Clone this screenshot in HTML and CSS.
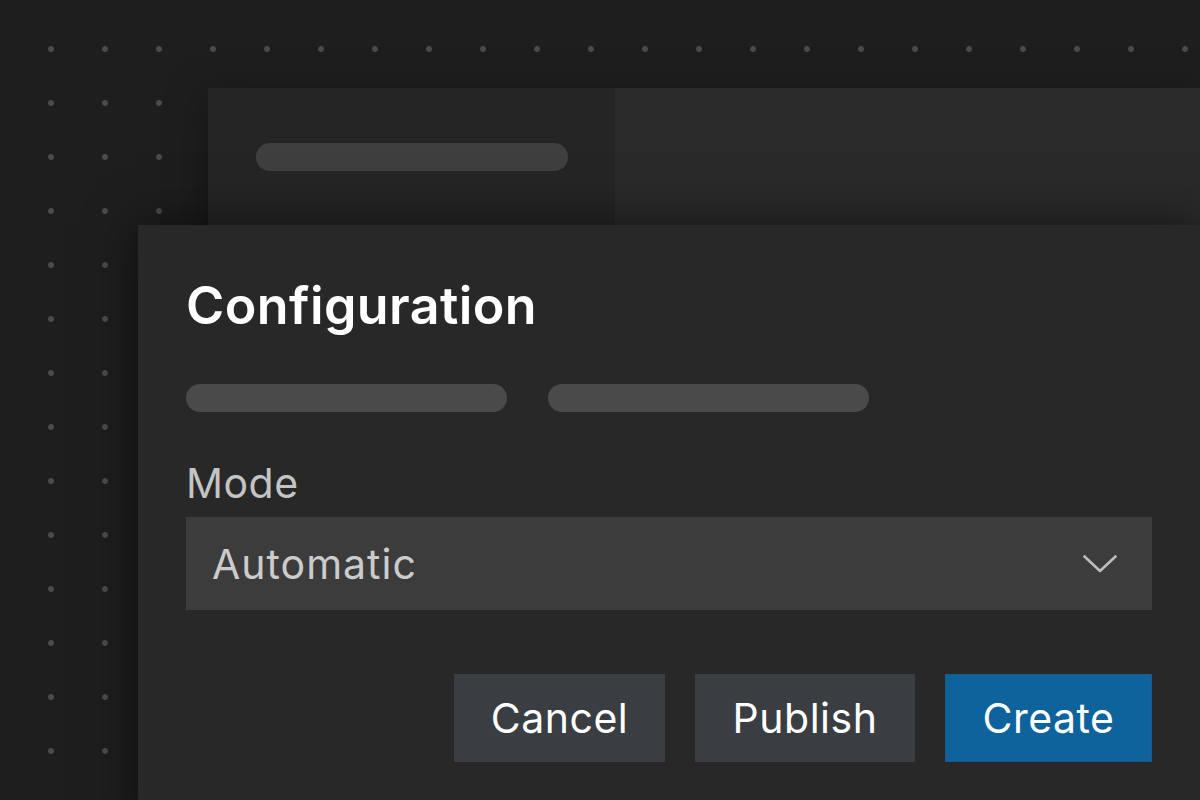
FILE: index.html
```html
<!DOCTYPE html>
<html lang="en">
<head>
<meta charset="utf-8">
<title>Configuration</title>
<link rel="stylesheet" href="styles.css">
</head>
<body>
<div class="desk">
  <div class="back-panel">
    <div class="back-side">
      <div class="back-pill"></div>
    </div>
    <div class="back-main"></div>
  </div>
  <section class="dialog">
    <h1 class="title">Configuration</h1>
    <div class="pills">
      <div class="pill"></div>
      <div class="pill"></div>
    </div>
    <label class="label">Mode</label>
    <div class="select">
      <span class="select-value">Automatic</span>
      <svg class="chevron" width="34" height="18" viewBox="0 0 34 18" aria-hidden="true">
        <path d="M1.5 1.5 L17 16 L32.5 1.5" fill="none" stroke="#bdbdbd" stroke-width="2.6" stroke-linecap="round" stroke-linejoin="round"/>
      </svg>
    </div>
    <div class="actions">
      <button class="btn btn-secondary">Cancel</button>
      <button class="btn btn-secondary">Publish</button>
      <button class="btn btn-primary">Create</button>
    </div>
  </section>
</div>
</body>
</html>
```
FILE: styles.css
```css
* { box-sizing: border-box; }
html, body { margin: 0; height: 100%; }
body {
  background-color: #1e1e1e;
  background-image: radial-gradient(circle, #4a4a4a 0, #4a4a4a 2.6px, rgba(74,74,74,0) 3.3px);
  background-size: 54px 54px;
  background-position: 24px 22px;
  font-family: Inter, "Noto Sans", "Liberation Sans", sans-serif;
  overflow: hidden;
}
.desk {
  position: relative;
  width: 1200px;
  height: 800px;
  overflow: hidden;
  padding: 88px 0 0 208px;
}
.back-panel {
  display: flex;
  height: 400px;
  box-shadow: 0 8px 40px rgba(0,0,0,0.35);
}
.back-side {
  width: 407px;
  background: #252525;
  padding: 55px 0 0 48px;
}
.back-pill {
  width: 312px;
  height: 28px;
  border-radius: 14px;
  background: #3f3f3f;
}
.back-main {
  flex: 1;
  background: #2a2a2a;
}
.dialog {
  position: absolute;
  left: 138px;
  top: 225px;
  width: 1062px;
  height: 620px;
  background: #282828;
  padding: 49px 48px 0 48px;
  box-shadow: 0 0 48px rgba(0,0,0,0.55);
}
.title {
  margin: 0;
  font-size: 52px;
  line-height: 64px;
  font-weight: 600;
  color: #ffffff;
  letter-spacing: 0.4px;
}
.pills {
  display: flex;
  gap: 41px;
  margin-top: 46px;
}
.pill {
  width: 321px;
  height: 28px;
  border-radius: 14px;
  background: #4a4a4a;
}
.label {
  display: block;
  margin-top: 47px;
  font-size: 41px;
  line-height: 48px;
  letter-spacing: 0.5px;
  color: #c4c4c4;
}
.select {
  margin-top: 10px;
  height: 93px;
  background: #3c3c3c;
  display: flex;
  align-items: center;
  justify-content: space-between;
  padding: 0 35px 0 26px;
}
.select-value {
  font-size: 41px;
  line-height: 48px;
  letter-spacing: 1px;
  color: #cccccc;
}
.chevron { display: block; }
.actions {
  display: flex;
  justify-content: flex-end;
  gap: 30px;
  margin-top: 64px;
}
.btn {
  height: 88px;
  border: 0;
  margin: 0;
  font-family: inherit;
  font-size: 41px;
  line-height: 48px;
  letter-spacing: 0.5px;
  color: #ffffff;
  padding: 0;
}
.btn-secondary { background: #3a3d41; }
.btn-secondary:first-child { width: 211px; }
.btn-secondary:nth-child(2) { width: 220px; }
.btn-primary {
  width: 207px;
  background: #0e639c;
  border: 1px solid #1a5888;
}
```
